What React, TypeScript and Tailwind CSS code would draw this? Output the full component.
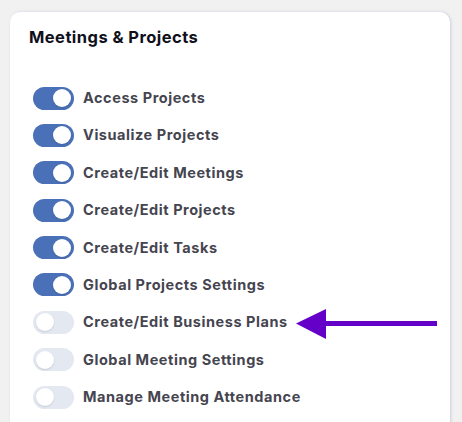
const permissions = [
  { label: "Access Projects", enabled: true },
  { label: "Visualize Projects", enabled: true },
  { label: "Create/Edit Meetings", enabled: true },
  { label: "Create/Edit Projects", enabled: true },
  { label: "Create/Edit Tasks", enabled: true },
  { label: "Global Projects Settings", enabled: true },
  { label: "Create/Edit Business Plans", enabled: false },
  { label: "Global Meeting Settings", enabled: false },
  { label: "Manage Meeting Attendance", enabled: false },
];

function Toggle({ enabled }: { enabled: boolean }) {
  return (
    <span
      className={`flex h-[23px] w-[41px] shrink-0 items-center rounded-full px-[3px] ${
        enabled ? "justify-end bg-[#4a70b7]" : "justify-start bg-[#e3e8f1]"
      }`}
    >
      <span className="h-[18px] w-[18px] rounded-full bg-white shadow-[0_1px_2px_rgba(0,0,0,0.12)]" />
    </span>
  );
}

function Arrow() {
  return (
    <svg
      className="pointer-events-none absolute left-[294px] top-[307px]"
      width="146"
      height="34"
      viewBox="0 0 146 34"
    >
      <rect x="30" y="14" width="113" height="5" fill="#6500c9" />
      <polygon points="2,16.5 32,2 32,32" fill="#6500c9" />
    </svg>
  );
}

export default function App() {
  return (
    <div
      className="relative h-[422px] w-[462px] overflow-hidden bg-[#f1f1f1] pl-[10px] pt-[12px]"
      style={{ fontFamily: "Inter, 'Noto Sans', sans-serif" }}
    >
      <div className="h-[430px] w-[440px] rounded-[10px] bg-white pl-[19px] pt-[13px] shadow-[1px_0_3px_rgba(180,186,210,0.6)]">
        <h2 className="text-[16.5px] font-bold leading-6 tracking-[0.45px] text-[#10101c]">
          Meetings &amp; Projects
        </h2>

        <ul className="mt-[37px] flex flex-col gap-[13.4px] pl-[4px]">
          {permissions.map((item) => (
            <li key={item.label} className="flex h-6 items-center gap-[9px]">
              <Toggle enabled={item.enabled} />
              <span className="text-[14.5px] font-bold leading-6 tracking-[0.55px] text-[#45454f]">
                {item.label}
              </span>
            </li>
          ))}
        </ul>
      </div>
      <Arrow />
    </div>
  );
}
